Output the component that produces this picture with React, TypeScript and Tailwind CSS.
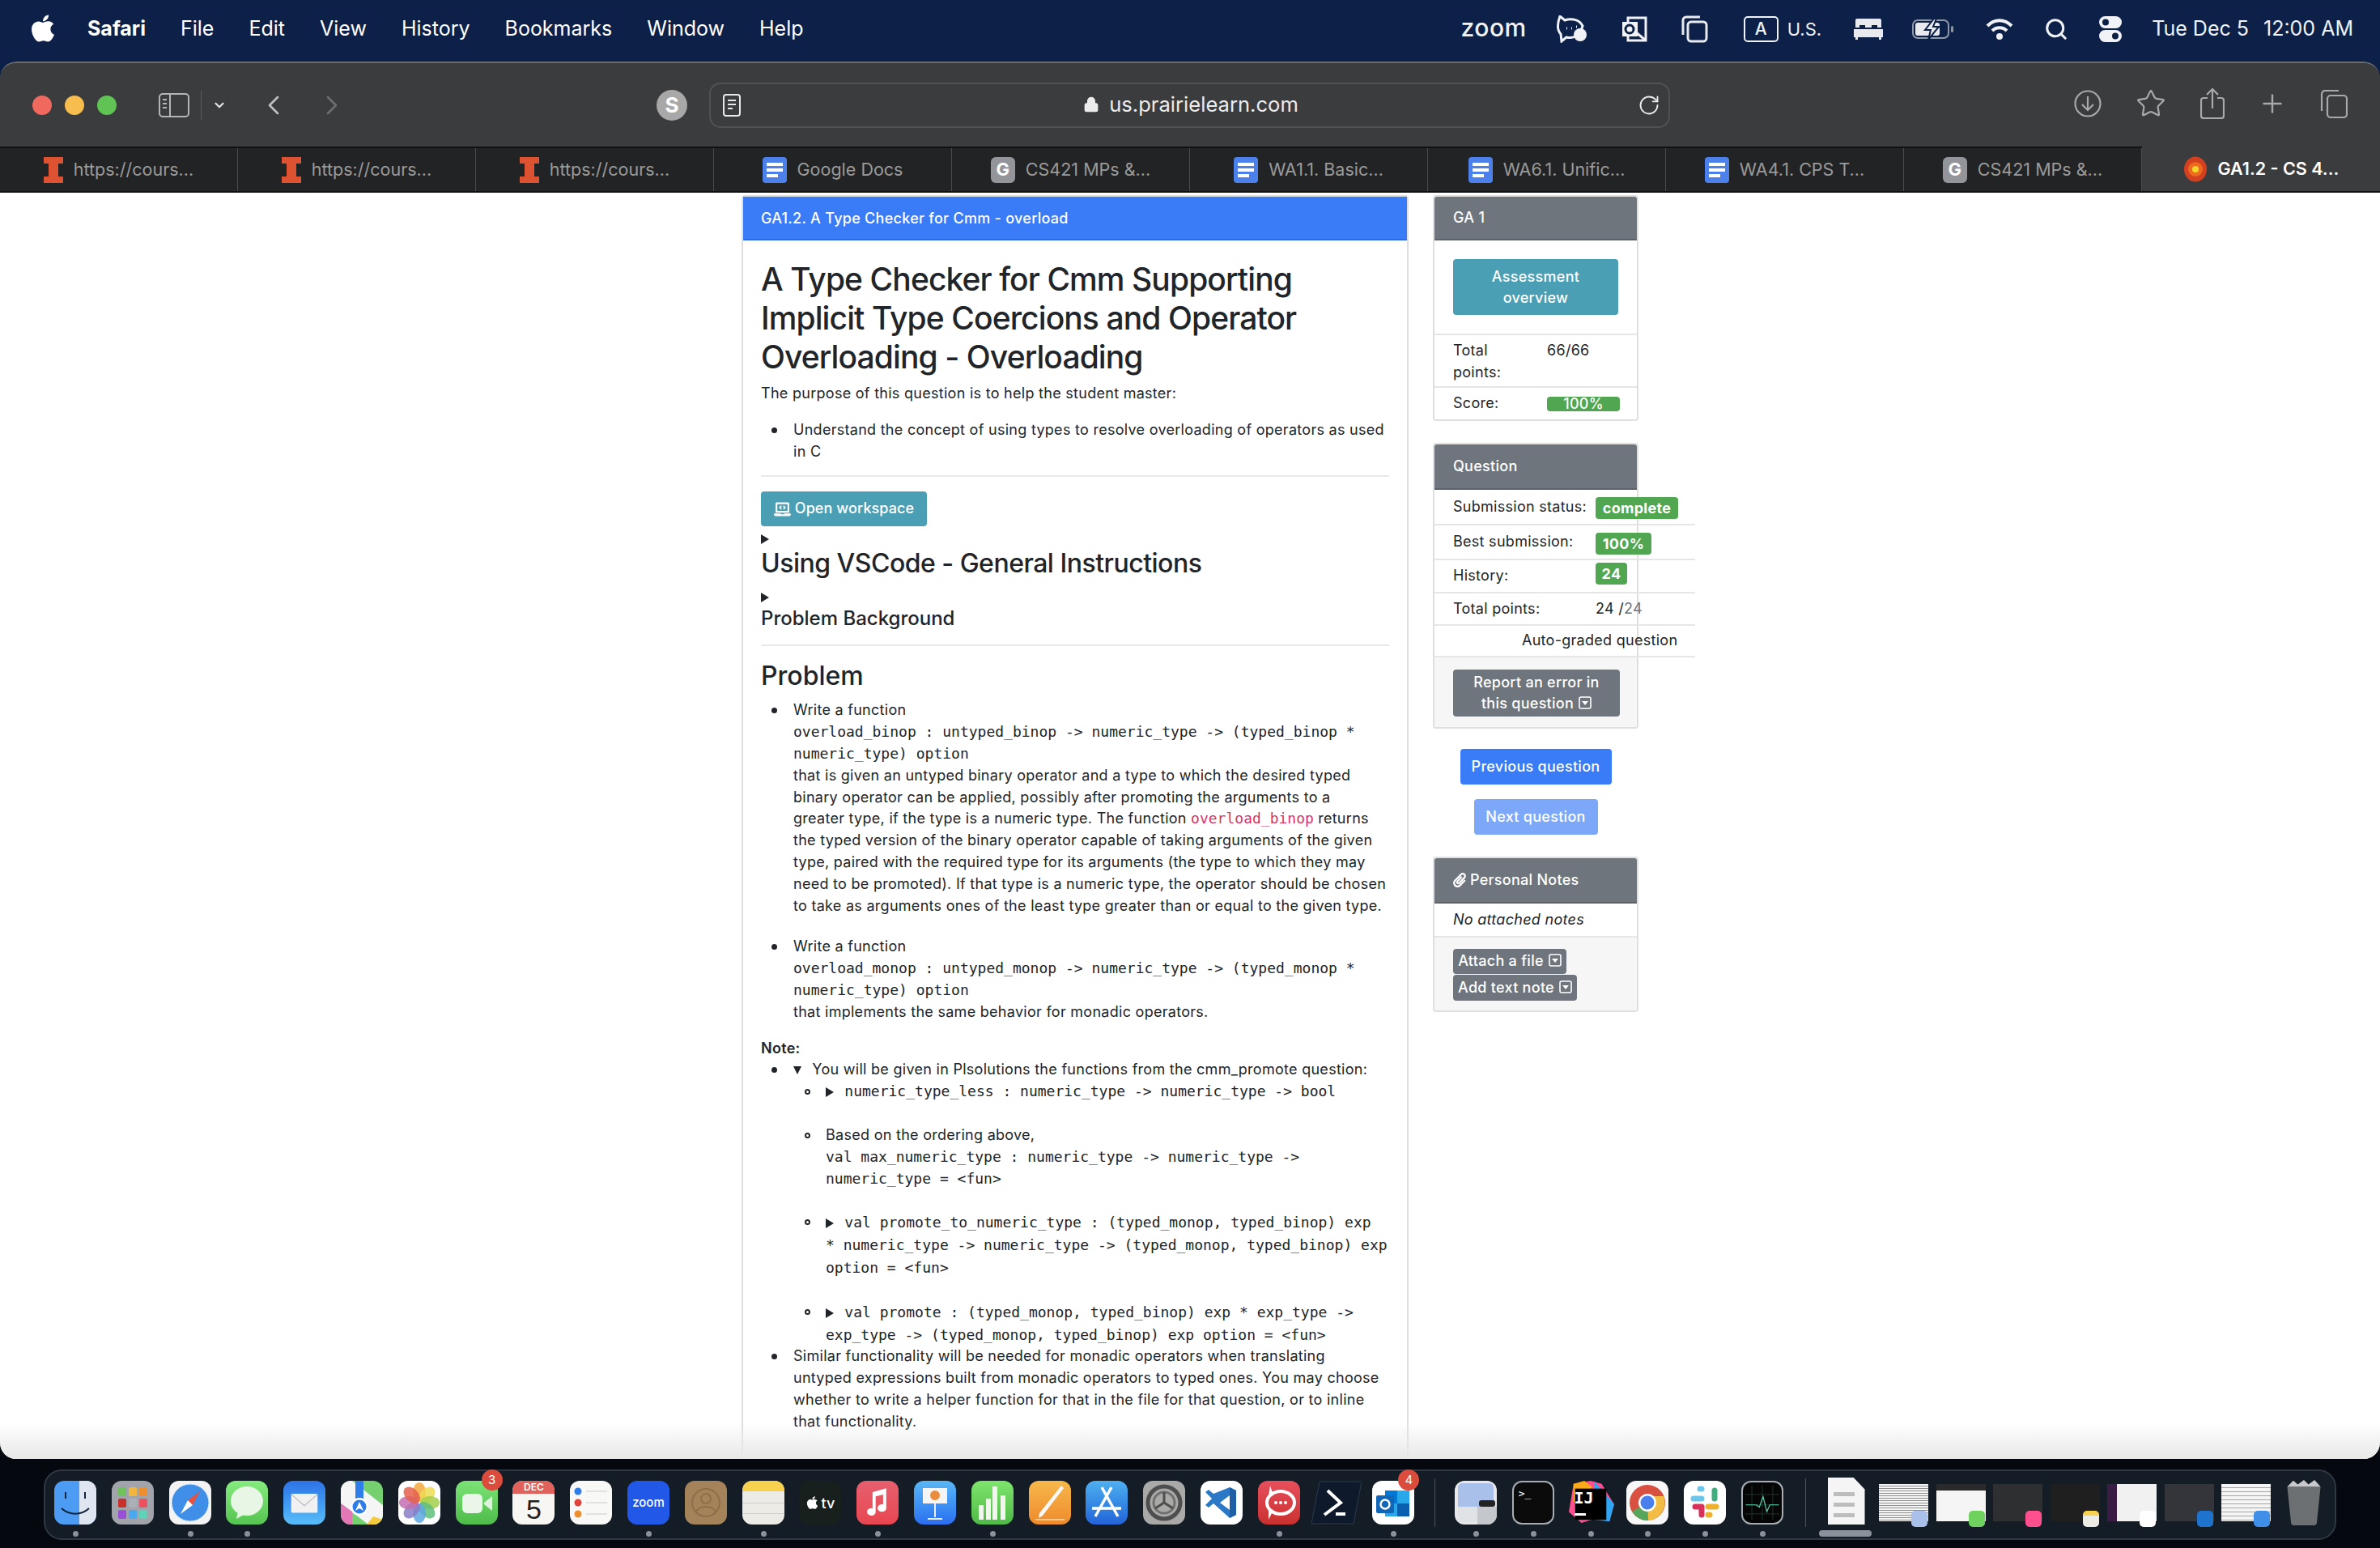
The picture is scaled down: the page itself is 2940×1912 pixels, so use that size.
import type { ReactNode } from 'react';
import { FaApple, FaLaptopCode, FaPaperclip } from 'react-icons/fa';
import { ChevronLeft, ChevronRight, ChevronDown, Plus, Search, Star, Lock, RotateCw } from 'lucide-react';

const sans = 'font-["Inter","Liberation_Sans",sans-serif]';

// safari puts its markers further from the text than chrome does
const disc = "relative before:absolute before:-left-[27px] before:top-[10px] before:w-[7px] before:h-[7px] before:rounded-full before:bg-[#212529] before:content-['']";
const circle = "relative before:absolute before:-left-[26px] before:top-[10px] before:w-[7px] before:h-[7px] before:rounded-full before:border-2 before:border-[#212529] before:content-['']";

const Tri = ({ down = false }: { down?: boolean }) => (
  <svg viewBox="0 0 10 12" className="inline-block w-[10px] h-[12px] fill-[#212529] align-[-1px]">
    {down ? <path d="M0 1h10L5 11z" /> : <path d="M0 0l10 6-10 6z" />}
  </svg>
);

const Code = ({ children }: { children: ReactNode }) => (
  <span className='font-["DejaVu_Sans_Mono",monospace] text-[18px] tracking-normal'>{children}</span>
);

const Caret = () => (
  <svg viewBox="0 0 16 16" className="inline-block w-[16px] h-[16px] ml-[6px] align-[-1px]">
    <rect x="1" y="1" width="14" height="14" rx="2" fill="none" stroke="currentColor" strokeWidth="1.6" />
    <path d="M4 6h8l-4 5z" fill="currentColor" />
  </svg>
);

const IFav = () => (
  <svg viewBox="0 0 24 32" className="w-[24px] h-[32px] fill-[#dd5331]">
    <path d="M0 0h24v8h-6v16h6v8H0v-8h6V8H0z" />
  </svg>
);
const DocFav = () => (
  <svg viewBox="0 0 30 32" className="w-[30px] h-[32px]">
    <rect width="30" height="32" rx="4" fill="#4c80ea" />
    <path d="M5 7h20v4H5zM5 14h20v4H5zM5 21h14v4H5z" fill="#fff" />
  </svg>
);
const GFav = () => (
  <div className="w-[30px] h-[32px] rounded-[6px] bg-[#94949b] text-white font-bold text-[22px] flex items-center justify-center">G</div>
);
const FlowerFav = () => (
  <svg viewBox="0 0 30 32" className="w-[30px] h-[32px]">
    <ellipse cx="15" cy="16" rx="14" ry="15.5" fill="#d2401f" />
    <circle cx="15" cy="16" r="9" fill="#ee6a1e" />
    <circle cx="15" cy="16" r="4" fill="#f1d62c" />
  </svg>
);

const tabs: { icon: ReactNode; label: string }[] = [
  { icon: <IFav />, label: 'https://cours...' },
  { icon: <IFav />, label: 'https://cours...' },
  { icon: <IFav />, label: 'https://cours...' },
  { icon: <DocFav />, label: 'Google Docs' },
  { icon: <GFav />, label: 'CS421 MPs &...' },
  { icon: <DocFav />, label: 'WA1.1. Basic...' },
  { icon: <DocFav />, label: 'WA6.1. Unific...' },
  { icon: <DocFav />, label: 'WA4.1. CPS T...' },
  { icon: <GFav />, label: 'CS421 MPs &...' },
  { icon: <FlowerFav />, label: 'GA1.2 - CS 4...' },
];

const MenuBar = () => (
  <div className="h-[76px] pl-[36px] pr-[33px] pb-[4px] flex items-center text-white text-[25px]">
    <FaApple className="w-[34px] h-[38px] mb-[3px]" />
    <span className="ml-[38px] font-bold">Safari</span>
    <span className="ml-[43px]">File</span>
    <span className="ml-[43px]">Edit</span>
    <span className="ml-[43px]">View</span>
    <span className="ml-[43px]">History</span>
    <span className="ml-[43px]">Bookmarks</span>
    <span className="ml-[43px]">Window</span>
    <span className="ml-[43px]">Help</span>
    <div className="ml-auto flex items-center text-[#f0f2f5]">
      <span className="font-medium text-[30px] tracking-[0.5px] leading-none mb-[4px]">zoom</span>
      <svg viewBox="0 0 40 34" className="w-[40px] h-[34px] ml-[35px] fill-none stroke-[#f0f2f5] stroke-[3px]">
        <path d="M6 1l6 5c8-3 18-1 22 7l-2 6c-2 6-10 10-18 8L8 32l-1-9C3 19 2 12 6 1z" />
        <circle cx="31" cy="24" r="8" fill="#f0f2f5" stroke="none" />
        <path d="M14 16h1M20 16h1M26 14h1" />
      </svg>
      <svg viewBox="0 0 32 32" className="w-[32px] h-[32px] ml-[42px] fill-none stroke-[#f0f2f5] stroke-[3px]">
        <rect x="8" y="2" width="22" height="28" />
        <rect x="1" y="7" width="19" height="18" fill="#f0f2f5" stroke="none" />
        <circle cx="10" cy="16" r="5" stroke="#0b1f45" />
        <path d="M18 20l12 10" />
      </svg>
      <svg viewBox="0 0 34 34" className="w-[34px] h-[34px] ml-[41px] fill-none stroke-[#e8eaee] stroke-[3px]">
        <rect x="9" y="8" width="23" height="24" rx="4" />
        <path d="M3 24V6a4 4 0 0 1 4-4h17" />
      </svg>
      <div className="w-[43px] h-[32px] ml-[44px] rounded-[5px] border-2 border-[#f0f2f5] flex items-center justify-center text-[21px] font-medium">A</div>
      <span className="ml-[11px] text-[22px] mr-[40px]">U.S.</span>
      <svg viewBox="0 0 36 26" className="w-[36px] h-[26px] fill-[#e8eaee]">
        <path d="M4 0h28a2 2 0 0 1 2 2v9h-5V8h-7v3h-8V8H7v3H2V2a2 2 0 0 1 2-2zM0 13h36v10h-2v3h-3v-3H5v3H2v-3H0z" />
      </svg>
      <svg viewBox="0 0 52 26" className="w-[52px] h-[26px] ml-[36px]">
        <rect x="1" y="2" width="44" height="22" rx="6" fill="none" stroke="#8e98a6" strokeWidth="2" />
        <rect x="4" y="5" width="30" height="16" rx="3" fill="#e8eaee" />
        <path d="M27 0L16 14h7l-3 12 13-16h-7l4-10z" fill="#e8eaee" stroke="#0b1f45" strokeWidth="2" />
        <rect x="48" y="9" width="3" height="8" rx="1.5" fill="#8e98a6" />
      </svg>
      <svg viewBox="0 0 34 28" className="w-[34px] h-[28px] ml-[39px] fill-none stroke-[#f0f2f5] stroke-[4px]">
        <path d="M2 10c9-9 21-9 30 0M8 16c5-5 13-5 18 0" />
        <circle cx="17" cy="23" r="4" fill="#f0f2f5" stroke="none" />
      </svg>
      <Search className="w-[30px] h-[30px] ml-[38px]" strokeWidth={2.4} />
      <svg viewBox="0 0 28 32" className="w-[28px] h-[32px] ml-[38px]">
        <rect width="28" height="15" rx="7.5" fill="#f0f2f5" />
        <rect y="17" width="28" height="15" rx="7.5" fill="#f0f2f5" />
        <circle cx="8" cy="7.5" r="4" fill="#0b1f45" />
        <circle cx="20" cy="24.5" r="4" fill="#0b1f45" />
      </svg>
      <span className="ml-[37px]">Tue Dec 5</span>
      <span className="ml-[18px]">12:00 AM</span>
    </div>
  </div>
);

const Toolbar = () => (
  <div className="h-[105px] flex items-center bg-[#3b3c3e] border-t-2 border-[#6a6b6c] rounded-t-[20px] text-[#a9a9a9]">
    <div className="w-[24px] h-[24px] ml-[40px] rounded-full bg-[#f0695e]" />
    <div className="w-[24px] h-[24px] ml-[16px] rounded-full bg-[#f7bd4f]" />
    <div className="w-[24px] h-[24px] ml-[16px] rounded-full bg-[#5fc454]" />
    <svg viewBox="0 0 38 30" className="w-[38px] h-[30px] ml-[52px] fill-none stroke-[#b5b5b5] stroke-[2px]">
      <rect x="1" y="1" width="36" height="28" rx="4" />
      <path d="M14 1v28" />
      <path d="M5 8h5M5 13h5M5 18h5" />
    </svg>
    <div className="w-px h-[36px] ml-[14px] bg-[#5b5c5e]" />
    <ChevronDown className="w-[18px] h-[18px] ml-[13px] text-[#e0e0e0]" strokeWidth={3} />
    <ChevronLeft className="w-[40px] h-[40px] ml-[38px] text-[#c0c0c0]" strokeWidth={1.6} />
    <ChevronRight className="w-[40px] h-[40px] ml-[32px] text-[#6c6d6f]" strokeWidth={1.6} />
    <div className="w-[38px] h-[38px] ml-[381px] rounded-full bg-[#a8a8a8] text-white font-bold text-[26px] flex items-center justify-center">S</div>
    <div className="w-[1187px] h-[56px] ml-[27px] rounded-[14px] border-2 border-[#505153] flex items-center pl-[15px] pr-[10px] text-[#ececec]">
      <svg viewBox="0 0 22 28" className="w-[22px] h-[28px] fill-none stroke-[#e8e8e8] stroke-[2px]">
        <rect x="1" y="1" width="20" height="26" rx="3" />
        <path d="M6 8h10M6 13h10M6 18h6" />
      </svg>
      <div className="flex-1 flex items-center justify-center pl-[4px] text-[25.6px]">
        <Lock className="w-[20px] h-[20px] mr-[12px] fill-[#ececec]" />
        <span>us.prairielearn.com</span>
      </div>
      <RotateCw className="w-[28px] h-[28px]" strokeWidth={1.6} />
    </div>
    <div className="flex items-center mb-[4px]">
      <svg viewBox="0 0 34 34" className="w-[34px] h-[34px] ml-[499px] fill-none stroke-[#a9a9a9] stroke-[2.2px]">
        <circle cx="17" cy="17" r="15.5" />
        <path d="M17 8v17M10 18l7 7 7-7" />
      </svg>
      <Star className="w-[38px] h-[38px] ml-[42px]" strokeWidth={1.4} />
      <svg viewBox="0 0 30 38" className="w-[30px] h-[38px] ml-[42px] fill-none stroke-[#a9a9a9] stroke-[2.2px]">
        <path d="M9 12H4a3 3 0 0 0-3 3v19a3 3 0 0 0 3 3h22a3 3 0 0 0 3-3V15a3 3 0 0 0-3-3h-5" />
        <path d="M15 25V2M8 8l7-7 7 7" />
      </svg>
      <Plus className="w-[36px] h-[36px] ml-[41px]" strokeWidth={1.6} />
      <svg viewBox="0 0 34 36" className="w-[34px] h-[36px] ml-[41px] fill-none stroke-[#a9a9a9] stroke-[2.2px]">
        <rect x="9" y="8" width="24" height="27" rx="4" />
        <path d="M2 27V6a4 4 0 0 1 4-4h17" />
      </svg>
    </div>
  </div>
);

const TabBar = () => (
  <div className="h-[57px] grid grid-cols-10 bg-[#222324] border-y-2 border-[#111]">
    {tabs.map((t, i) => (
      <div
        key={i}
        className={
          i === 9
            ? 'flex items-center justify-center gap-[13px] bg-[#3b3c3e] -mt-[2px] text-white font-semibold text-[21.5px]'
            : 'flex items-center justify-center gap-[13px] border-r border-[#4a4b4c] text-[#9a9a9a] text-[21.5px]'
        }
      >
        {t.icon}
        <span>{t.label}</span>
      </div>
    ))}
  </div>
);

const MainCard = () => (
  <div className="w-[824px] shrink-0 border-x-2 border-t-2 border-[#dfdfdf] rounded-t-[4px] self-stretch text-[18px] tracking-[0.28px]">
    <div className="h-[54px] px-[22px] flex items-center bg-[#3a7bf8] text-white font-medium border-b-2 border-[#2e6bdf]">
      GA1.2. A Type Checker for Cmm - overload
    </div>
    <div className="px-[22px] leading-[26.8px]">
      <h1 className="mt-[24px] text-[39px] leading-[48px] font-medium tracking-[-0.9px]">
        A Type Checker for Cmm Supporting
        <br />
        Implicit Type Coercions and Operator
        <br />
        Overloading - Overloading
      </h1>
      <p className="mt-[8px]">The purpose of this question is to help the student master:</p>
      <ul className="mt-[18px] pl-[40px]">
        <li className={disc}>
          Understand the concept of using types to resolve overloading of operators as used
          <br />
          in C
        </li>
      </ul>
      <hr className="mt-[16px] border-t-2 border-[#e9e9e9]" />
      <button className="mt-[18px] h-[43px] w-[205px] bg-[#4b9fb5] rounded-[4px] text-white font-medium tracking-[0.1px] flex items-center justify-center gap-[5px]">
        <FaLaptopCode className="w-[21px] h-[18px]" />
        Open workspace
      </button>
      <div className="mt-[5px] h-[20px] leading-[20px]">
        <Tri />
      </div>
      <h2 className="mt-[2px] text-[32px] leading-[38px] font-medium tracking-[-0.5px]">Using VSCode - General Instructions</h2>
      <div className="mt-[12px] h-[20px] leading-[20px]">
        <Tri />
      </div>
      <h3 className="mt-[2px] text-[24px] leading-[29px] font-medium tracking-normal">Problem Background</h3>
      <hr className="mt-[18px] border-t-2 border-[#e9e9e9]" />
      <h2 className="mt-[18px] text-[32px] leading-[38px] font-medium tracking-normal">Problem</h2>
      <ul className="mt-[10px] pl-[40px]">
        <li className={disc}>
          Write a function
          <br />
          <Code>overload_binop : untyped_binop -&gt; numeric_type -&gt; (typed_binop *</Code>
          <br />
          <Code>numeric_type) option</Code>
          <br />
          that is given an untyped binary operator and a type to which the desired typed
          <br />
          binary operator can be applied, possibly after promoting the arguments to a
          <br />
          greater type, if the type is a numeric type. The function{' '}
          <span className='font-["DejaVu_Sans_Mono",monospace] text-[18px] tracking-normal text-[#d6336c]'>overload_binop</span> returns
          <br />
          the typed version of the binary operator capable of taking arguments of the given
          <br />
          type, paired with the required type for its arguments (the type to which they may
          <br />
          need to be promoted). If that type is a numeric type, the operator should be chosen
          <br />
          to take as arguments ones of the least type greater than or equal to the given type.
        </li>
        <li className={`mt-[24px] ${disc}`}>
          Write a function
          <br />
          <Code>overload_monop : untyped_monop -&gt; numeric_type -&gt; (typed_monop *</Code>
          <br />
          <Code>numeric_type) option</Code>
          <br />
          that implements the same behavior for monadic operators.
        </li>
      </ul>
      <p className="mt-[18px] font-semibold">Note:</p>
      <ul className="pl-[40px]">
        <li className={disc}>
          <Tri down /> <span className="ml-[8px]">You will be given in Plsolutions the functions from the cmm_promote question:</span>
          <ul className="pl-[40px]">
            <li className={circle}>
              <Tri /> <span className="ml-[8px]"><Code>numeric_type_less : numeric_type -&gt; numeric_type -&gt; bool</Code></span>
            </li>
            <li className={`mt-[27px] ${circle}`}>
              Based on the ordering above,
              <br />
              <Code>val max_numeric_type : numeric_type -&gt; numeric_type -&gt;</Code>
              <br />
              <Code>numeric_type = &lt;fun&gt;</Code>
            </li>
            <li className={`mt-[27px] leading-[28px] ${circle}`}>
              <Tri /> <span className="ml-[8px]"><Code>val promote_to_numeric_type : (typed_monop, typed_binop) exp</Code></span>
              <br />
              <Code>* numeric_type -&gt; numeric_type -&gt; (typed_monop, typed_binop) exp</Code>
              <br />
              <Code>option = &lt;fun&gt;</Code>
            </li>
            <li className={`mt-[27px] leading-[28px] ${circle}`}>
              <Tri /> <span className="ml-[8px]"><Code>val promote : (typed_monop, typed_binop) exp * exp_type -&gt;</Code></span>
              <br />
              <Code>exp_type -&gt; (typed_monop, typed_binop) exp option = &lt;fun&gt;</Code>
            </li>
          </ul>
        </li>
        <li className={`-mt-[1px] ${disc}`}>
          Similar functionality will be needed for monadic operators when translating
          <br />
          untyped expressions built from monadic operators to typed ones. You may choose
          <br />
          whether to write a helper function for that in the file for that question, or to inline
          <br />
          that functionality.
        </li>
      </ul>
    </div>
  </div>
);

const SideHeader = ({ tall = false, children }: { tall?: boolean; children: ReactNode }) => (
  <div className={`${tall ? 'h-[56px]' : 'h-[54px]'} px-[23px] flex items-center bg-[#6f757d] text-white font-medium border-b-2 border-[#5d6268] rounded-t-[3px]`}>
    {children}
  </div>
);

const Badge = ({ children, className }: { children: ReactNode; className: string }) => (
  <span className={`h-[27px] rounded-[4px] bg-[#50a651] text-white font-bold leading-[27px] text-center ${className}`}>
    {children}
  </span>
);

const SideColumn = () => (
  <div className="w-[254px] shrink-0 text-[18px] tracking-[0.28px] leading-[26.8px] text-[#212529]">
    <div className="border-2 border-[#dfdfdf] rounded-[4px]">
      <SideHeader>GA 1</SideHeader>
      <div className="h-[117px] px-[23px] flex items-center border-b-2 border-[#e6e6e6]">
        <button className="w-[206px] h-[69px] bg-[#4b9fb5] rounded-[4px] text-white font-medium leading-[26px]">
          Assessment
          <br />
          overview
        </button>
      </div>
      <div className="h-[65px] pl-[23px] flex pt-[6px] border-b-2 border-[#e6e6e6]">
        <span className="w-[116px]">
          Total
          <br />
          points:
        </span>
        <span>66/66</span>
      </div>
      <div className="h-[39px] pl-[23px] flex items-center">
        <span className="w-[116px]">Score:</span>
        <span className="w-[90px] h-[18px] rounded-[4px] bg-[#50a651] text-white font-medium text-center leading-[18px]">100%</span>
      </div>
    </div>

    <div className="mt-[27px] border-2 border-[#dfdfdf] rounded-[4px]">
      <SideHeader tall>Question</SideHeader>
      <div className="w-[322px]">
        <div className="h-[44px] pl-[23px] flex items-center border-b-2 border-[#e6e6e6]">
          <span className="w-[176px]">Submission status:</span>
          <Badge className="w-[102px] mt-[3px]">complete</Badge>
        </div>
        <div className="h-[43px] pl-[23px] flex items-center border-b-2 border-[#e6e6e6]">
          <span className="w-[176px]">Best submission:</span>
          <Badge className="w-[69px] mt-[3px]">100%</Badge>
        </div>
        <div className="h-[41px] pl-[23px] flex items-center border-b-2 border-[#e6e6e6]">
          <span className="w-[176px]">History:</span>
          <Badge className="w-[39px] -mt-[6px]">24</Badge>
        </div>
        <div className="h-[40px] pl-[23px] flex items-center border-b-2 border-[#e6e6e6]">
          <span className="w-[176px]">Total points:</span>
          <span>
            24 /<span className="text-[#6c757d]">24</span>
          </span>
        </div>
        <div className="h-[39px] pl-[108px] flex items-center border-b-2 border-[#e6e6e6]">Auto-graded question</div>
      </div>
      <div className="h-[86px] px-[23px] pt-[15px] bg-[#f6f6f6]">
        <button className="w-[206px] h-[58px] bg-[#6f757d] rounded-[4px] text-white font-medium leading-[26px]">
          Report an error in
          <br />
          this question
          <Caret />
        </button>
      </div>
    </div>

    <div className="mt-[25px] flex flex-col items-center gap-[18px]">
      <button className="w-[187px] h-[44px] bg-[#3a7bf8] rounded-[4px] text-white font-medium">Previous question</button>
      <button className="w-[153px] h-[44px] bg-[#7da8f9] rounded-[4px] text-white font-medium">Next question</button>
    </div>

    <div className="mt-[27px] border-2 border-[#dfdfdf] rounded-[4px]">
      <SideHeader tall>
        <FaPaperclip className="w-[16px] h-[18px] mr-[5px]" />
        Personal Notes
      </SideHeader>
      <div className="h-[42px] px-[23px] flex items-center italic border-b-2 border-[#e6e6e6]">No attached notes</div>
      <div className="h-[90px] px-[23px] pt-[14px] bg-[#f6f6f6] flex flex-col items-start gap-px">
        <button className="h-[31px] w-[140px] bg-[#6f757d] rounded-[4px] text-white font-medium whitespace-nowrap">
          Attach a file
          <Caret />
        </button>
        <button className="h-[32px] w-[153px] bg-[#6f757d] rounded-[4px] text-white font-medium whitespace-nowrap">
          Add text note
          <Caret />
        </button>
      </div>
    </div>
  </div>
);

const Tile = ({ className, children }: { className: string; children?: ReactNode }) => (
  <div className={`relative w-[52px] h-[54px] rounded-[12px] overflow-hidden flex items-center justify-center ${className}`}>{children}</div>
);

const Notify = ({ n }: { n: number }) => (
  <div className="absolute -top-[14px] -right-[6px] w-[26px] h-[26px] rounded-full bg-[#dc4c3d] text-white text-[15px] flex items-center justify-center">{n}</div>
);

const dockApps: { el: ReactNode; dot?: boolean }[] = [
  {
    dot: true,
    el: (
      <Tile className="bg-[#4c9cf3]">
        <div className="absolute right-0 top-0 bottom-0 w-[40%] bg-[#dfe6ef]" />
        <svg viewBox="0 0 52 54" className="absolute inset-0 fill-none stroke-[#10233f] stroke-[2px]">
          <path d="M14 14v8M38 14v8M9 34c10 9 24 9 34 0" />
        </svg>
      </Tile>
    ),
  },
  {
    el: (
      <Tile className="bg-[#a1a4aa] grid grid-cols-3 gap-[3px] p-[8px]">
        {['#6fc35a', '#f2b73c', '#ee8e2d', '#c9302a', '#aab0b5', '#ec5160', '#9a4fd8', '#4aa8f2', '#5fd3b7'].map((c) => (
          <div key={c} className="h-[11px] rounded-[2px]" style={{ background: c }} />
        ))}
      </Tile>
    ),
  },
  {
    dot: true,
    el: (
      <Tile className="bg-[#f3f3f3]">
        <svg viewBox="0 0 52 54" className="w-[52px] h-[54px]">
          <circle cx="26" cy="27" r="23" fill="#3f8fe8" stroke="#d8e8f8" strokeWidth="1" />
          <path d="M38 13L23 24l6 6z" fill="#e8503f" />
          <path d="M14 41l15-11-6-6z" fill="#fff" />
        </svg>
      </Tile>
    ),
  },
  {
    dot: true,
    el: (
      <Tile className="bg-gradient-to-b from-[#85ec7d] to-[#55c451]">
        <svg viewBox="0 0 52 54" className="w-[52px] h-[54px]">
          <ellipse cx="26" cy="25" rx="20" ry="18" fill="#e8f6e6" />
          <path d="M15 38l-2 9 9-5z" fill="#e8f6e6" />
        </svg>
      </Tile>
    ),
  },
  {
    el: (
      <Tile className="bg-gradient-to-b from-[#2e72e6] to-[#58bdf8]">
        <svg viewBox="0 0 52 54" className="w-[40px] h-[40px]">
          <rect x="4" y="12" width="44" height="32" rx="2" fill="#f1f1f1" />
          <path d="M4 13l22 19 22-19" fill="none" stroke="#b8b8b8" strokeWidth="1.5" />
        </svg>
      </Tile>
    ),
  },
  {
    el: (
      <Tile className="bg-[#75d06f]">
        <svg viewBox="0 0 52 54" className="w-[52px] h-[54px]">
          <path d="M0 0h14L52 30v24H34L0 28z" fill="#f5f5f5" />
          <path d="M18 0h10v30H18z" fill="#2f7de8" />
          <path d="M0 28l14 10v16H0z" fill="#e278b5" />
          <path d="M32 54l8-10 12 4v6z" fill="#f4c93c" />
          <circle cx="23" cy="32" r="11" fill="#fff" />
          <circle cx="23" cy="32" r="8.5" fill="#2f7de8" />
          <path d="M23 26l5 11-5-3-5 3z" fill="#fff" />
        </svg>
      </Tile>
    ),
  },
  {
    el: (
      <Tile className="bg-white">
        <svg viewBox="0 0 52 54" className="w-[52px] h-[54px]">
          {['#f2a93b', '#eddb52', '#a5cf4b', '#5fbf7b', '#5da7e0', '#8a7cc8', '#c46eb0', '#e5604c'].map((c, i) => (
            <ellipse key={c} cx="26" cy="14" rx="8" ry="12" fill={c} opacity="0.85" transform={`rotate(${i * 45} 26 27)`} />
          ))}
        </svg>
      </Tile>
    ),
  },
  {
    el: (
      <div className="relative">
        <Tile className="bg-gradient-to-b from-[#7ce476] to-[#4dbb4a]">
          <svg viewBox="0 0 52 54" className="w-[52px] h-[54px]">
            <rect x="8" y="16" width="25" height="24" rx="6" fill="#eaf7e8" />
            <path d="M35 27l10-8v18l-10-8z" fill="#dff2dd" />
          </svg>
        </Tile>
        <Notify n={3} />
      </div>
    ),
  },
  {
    el: (
      <Tile className="bg-[#f7f6f3] flex-col justify-start">
        <div className="w-full h-[16px] bg-[#e0625a] text-white text-[12px] font-semibold text-center leading-[16px]">DEC</div>
        <div className='text-[34px] leading-[38px] text-[#222] font-["Liberation_Sans",sans-serif]'>5</div>
      </Tile>
    ),
  },
  {
    el: (
      <Tile className="bg-[#f8f8f6]">
        <svg viewBox="0 0 52 54" className="w-[52px] h-[54px]">
          <circle cx="10" cy="13" r="4.5" fill="#2f7de8" />
          <circle cx="10" cy="27" r="4.5" fill="#e0443c" />
          <circle cx="10" cy="41" r="4.5" fill="#ee8e2d" />
          <path d="M20 13h26M20 27h26M20 41h26" stroke="#c9c9c9" strokeWidth="1.2" />
        </svg>
      </Tile>
    ),
  },
  {
    dot: true,
    el: <Tile className="bg-[#2158e8] text-white text-[15px] font-medium">zoom</Tile>,
  },
  {
    el: (
      <Tile className="bg-[#a4825a]">
        <svg viewBox="0 0 52 54" className="w-[52px] h-[54px] fill-none stroke-[#8e6f4a] stroke-[2px]">
          <circle cx="26" cy="27" r="17" />
          <circle cx="26" cy="22" r="6" />
          <path d="M14 38c4-8 20-8 24 0" />
        </svg>
      </Tile>
    ),
  },
  {
    dot: true,
    el: (
      <Tile className="bg-[#ecebe6] justify-start">
        <div className="absolute top-0 w-full h-[13px] bg-[#f8d24e]" />
        <div className="absolute top-[27px] w-full h-px bg-[#cfcfc9]" />
        <div className="absolute top-[40px] w-full h-px bg-[#cfcfc9]" />
      </Tile>
    ),
  },
  {
    el: (
      <Tile className="bg-[#17201c] text-white gap-[2px] text-[18px] font-medium">
        <FaApple className="w-[17px] h-[18px]" />
        tv
      </Tile>
    ),
  },
  {
    dot: true,
    el: (
      <Tile className="bg-gradient-to-b from-[#e75f6e] to-[#e84651]">
        <svg viewBox="0 0 52 54" className="w-[40px] h-[44px] fill-white">
          <path d="M18 10l22-6v31a7 6 0 1 1-5-5V14l-12 3v24a7 6 0 1 1-5-5z" />
        </svg>
      </Tile>
    ),
  },
  {
    el: (
      <Tile className="bg-gradient-to-b from-[#5ab7f5] to-[#2c6ef0]">
        <svg viewBox="0 0 52 54" className="w-[52px] h-[54px]">
          <rect x="11" y="9" width="30" height="19" fill="#f5f5f5" />
          <circle cx="26" cy="18" r="6" fill="#e98d3c" />
          <path d="M25 28h2v17h-2zM17 46h18v2H17z" fill="#f0f0f0" />
        </svg>
      </Tile>
    ),
  },
  {
    dot: true,
    el: (
      <Tile className="bg-gradient-to-b from-[#7ee56c] to-[#4fb947]">
        <svg viewBox="0 0 52 54" className="w-[52px] h-[54px] fill-[#f2f7ee]">
          <rect x="9" y="30" width="6" height="18" />
          <rect x="18" y="22" width="6" height="26" />
          <rect x="26" y="7" width="6" height="41" />
          <rect x="36" y="18" width="6" height="30" />
        </svg>
      </Tile>
    ),
  },
  {
    el: (
      <Tile className="bg-gradient-to-b from-[#f7b84a] to-[#ee8a2c]">
        <svg viewBox="0 0 52 54" className="w-[52px] h-[54px]">
          <path d="M40 6l3 3-26 34-5 3 1-6z" fill="#f7f7f7" />
          <path d="M8 48h36" stroke="#f7d9a8" strokeWidth="1.5" />
        </svg>
      </Tile>
    ),
  },
  {
    el: (
      <Tile className="bg-gradient-to-b from-[#4fb0f0] to-[#2463d8]">
        <svg viewBox="0 0 52 54" className="w-[52px] h-[54px] fill-none stroke-white stroke-[3.5px]">
          <path d="M32 8L12 44M20 8l20 36M8 34h36" />
        </svg>
      </Tile>
    ),
  },
  {
    el: (
      <Tile className="bg-[#a9aaa8]">
        <svg viewBox="0 0 52 54" className="w-[52px] h-[54px] fill-none">
          <circle cx="26" cy="27" r="20" stroke="#4e4e4e" strokeWidth="5" />
          <circle cx="26" cy="27" r="13" stroke="#707070" strokeWidth="3" />
          <path d="M26 27V14M26 27l-11 7M26 27l11 7" stroke="#4e4e4e" strokeWidth="3" />
        </svg>
      </Tile>
    ),
  },
  {
    el: (
      <Tile className="bg-white">
        <svg viewBox="0 0 52 54" className="w-[52px] h-[54px]">
          <path d="M36 8l8 4v30l-8 4-20-18-6 5-4-3 8-8-8-8 4-3 6 5z" fill="#2b78c6" />
          <path d="M36 8v38l8-4V12z" fill="#1f5fa6" />
          <path d="M36 18L24 27l12 9z" fill="#fff" />
        </svg>
      </Tile>
    ),
  },
  {
    dot: true,
    el: (
      <Tile className="bg-gradient-to-b from-[#e84f5c] to-[#c9302f]">
        <svg viewBox="0 0 52 54" className="w-[52px] h-[54px]">
          <ellipse cx="28" cy="27" rx="17" ry="14" fill="none" stroke="#fff" strokeWidth="4" />
          <path d="M15 6l4 12-6 2zM13 48l6-12-6-2z" fill="#fff" />
          <circle cx="22" cy="27" r="2" fill="#fff" />
          <circle cx="28" cy="27" r="2" fill="#fff" />
          <circle cx="34" cy="27" r="2" fill="#fff" />
        </svg>
      </Tile>
    ),
  },
  {
    el: (
      <svg viewBox="0 0 62 54" className="w-[62px] h-[54px] -ml-[5px]">
        <path d="M10 1h52l-10 52H0z" fill="#0e1a2c" stroke="#2c3a4e" />
        <path d="M20 12l16 15-20 15" fill="none" stroke="#fff" strokeWidth="4" />
        <path d="M30 41h12" stroke="#fff" strokeWidth="4" />
      </svg>
    ),
  },
  {
    dot: true,
    el: (
      <div className="relative">
        <Tile className="bg-white">
          <svg viewBox="0 0 52 54" className="w-[52px] h-[54px]">
            <rect x="16" y="12" width="30" height="32" fill="#28a8ea" />
            <rect x="16" y="12" width="15" height="16" fill="#0078d4" />
            <rect x="31" y="28" width="15" height="16" fill="#0a5fb0" />
            <rect x="5" y="18" width="22" height="22" rx="2" fill="#1166b8" />
            <circle cx="16" cy="29" r="5.5" fill="none" stroke="#fff" strokeWidth="2.5" />
          </svg>
        </Tile>
        <Notify n={4} />
      </div>
    ),
  },
];

const dockRight: { el: ReactNode; dot?: boolean }[] = [
  {
    dot: true,
    el: (
      <Tile className="bg-[#e8e8ea]">
        <svg viewBox="0 0 52 54" className="w-[52px] h-[54px]">
          <rect x="4" y="3" width="44" height="48" rx="5" fill="#a9c0ea" />
          <rect x="4" y="32" width="44" height="19" fill="#dfe3e6" />
          <rect x="30" y="24" width="20" height="8" rx="3" fill="#222" />
          <path d="M28 32h24v22H28z" fill="#c4c8cc" />
        </svg>
      </Tile>
    ),
  },
  {
    dot: true,
    el: (
      <Tile className="bg-[#0b0b0b] border-2 border-[#a8adb3] text-white justify-start items-start">
        <span className='ml-[6px] mt-[4px] text-[13px] font-["DejaVu_Sans_Mono",monospace]'>&gt;_</span>
      </Tile>
    ),
  },
  {
    dot: true,
    el: (
      <div className="relative w-[52px] h-[54px]">
        <svg viewBox="0 0 60 56" className="absolute -left-[4px] top-0 w-[60px] h-[54px]">
          <path d="M2 40L8 4l22-4 14 4 16 26-6 22-16-4-20 6z" fill="#ff4f8f" />
          <path d="M34 0l26 30-6 22-18-2z" fill="#2ea6f5" />
          <path d="M8 4l14-4 10 8-24 20z" fill="#fba918" />
          <rect x="10" y="10" width="40" height="40" fill="#000" />
        </svg>
        <span className='absolute left-[6px] top-[11px] text-white font-bold text-[20px] font-["DejaVu_Sans_Mono",monospace] leading-none'>IJ</span>
        <div className="absolute left-[6px] top-[40px] w-[14px] h-[3px] bg-white" />
      </div>
    ),
  },
  {
    dot: true,
    el: (
      <Tile className="bg-[#f7f7f7]">
        <svg viewBox="0 0 52 54" className="w-[52px] h-[54px]">
          <circle cx="26" cy="27" r="22" fill="#d85140" />
          <path d="M26 27L7 38a22 22 0 0 0 20 11z" fill="#58a55c" />
          <path d="M26 27l1 22a22 22 0 0 0 19-30H26z" fill="#f2bd42" />
          <circle cx="26" cy="27" r="11" fill="#fff" />
          <circle cx="26" cy="27" r="8.5" fill="#4a80ee" />
        </svg>
      </Tile>
    ),
  },
  {
    dot: true,
    el: (
      <Tile className="bg-white">
        <svg viewBox="0 0 52 54" className="w-[52px] h-[54px]" strokeLinecap="round">
          <path d="M12 22h10M20 10h2" stroke="#6cc5ea" strokeWidth="7" />
          <path d="M38 12v10" stroke="#3fae7e" strokeWidth="7" />
          <path d="M30 32h10" stroke="#ecb22e" strokeWidth="7" />
          <path d="M14 32h8M22 32v10" stroke="#d8315b" strokeWidth="7" />
          <path d="M30 42h2" stroke="#ecb22e" strokeWidth="7" />
        </svg>
      </Tile>
    ),
  },
  {
    dot: true,
    el: (
      <Tile className="bg-[#050505] border-2 border-[#a8adb3]">
        <svg viewBox="0 0 52 54" className="w-[48px] h-[50px] fill-none">
          <path d="M12 4v46M26 4v46M40 4v46M3 16h46M3 30h46M3 42h46" stroke="#1f3a2e" />
          <path d="M4 30h14l4 3 5-14 5 20 4-9h12" stroke="#5fd0b0" strokeWidth="1.3" />
        </svg>
      </Tile>
    ),
  },
];

const Thumb = ({ className, children }: { className: string; children?: ReactNode }) => (
  <div className="relative w-[61px] h-[54px]">
    <div className={`absolute inset-x-0 top-[4px] h-[46px] ${className}`} />
    {children}
  </div>
);

const MiniIcon = ({ className }: { className: string }) => (
  <div className={`absolute top-[37px] left-[40px] w-[20px] h-[20px] rounded-[5px] ${className}`} />
);

const Dot = () => <div className="absolute -bottom-[15px] left-1/2 -ml-[3px] w-[7px] h-[7px] rounded-full bg-[#8b919a]" />;

const DockItem = ({ el, dot }: { el: ReactNode; dot?: boolean }) => (
  <div className="relative w-[52px] h-[54px] shrink-0">
    {el}
    {dot && <Dot />}
  </div>
);

const Dock = () => (
  <div className="mt-[13px] mx-[54px] h-[87px] rounded-[22px] bg-[#141c26] border-2 border-[#2f3742] pl-[11px] pt-[12px] flex gap-[18.8px]">
    {dockApps.map((a, i) => (
      <DockItem key={i} {...a} />
    ))}
    <div className="w-px h-[60px] bg-[#4b525c] -mt-[3px] mx-[5.5px]" />
    {dockRight.map((a, i) => (
      <DockItem key={i} {...a} />
    ))}
    <div className="w-px h-[60px] bg-[#4b525c] -mt-[3px] mx-[8px]" />
    <div className="relative w-[46px] h-[58px] -mt-[4px] shrink-0">
      <div className="absolute inset-0 bg-[#f5f5f5] [clip-path:polygon(0_0,70%_0,100%_25%,100%_100%,0_100%)]" />
      <div className="absolute left-[7px] top-[18px] w-[26px] h-[5px] bg-[#bdbdbd] shadow-[0_13px_0_#bdbdbd,0_26px_0_#bdbdbd]" />
      <div className="absolute -bottom-[15px] -left-[11px] w-[65px] h-[8px] rounded-[4px] bg-[#8b919a]" />
    </div>
    <div className="flex -ml-[1px] gap-[9.5px]">
      <Thumb className="bg-[#f1f1f1] bg-[repeating-linear-gradient(180deg,#f5f5f5_0,#f5f5f5_2px,#8f8f8f_2px,#8f8f8f_3px)]">
        <MiniIcon className="bg-[#a9c0ea]" />
      </Thumb>
      <Thumb className="bg-[#f5f5f5] border-t-[8px] border-[#2a2a2a]">
        <MiniIcon className="bg-[#6fd25f]" />
      </Thumb>
      <Thumb className="bg-[#2d2f31]">
        <MiniIcon className="bg-[#ff4f8f]" />
      </Thumb>
      <Thumb className="bg-[#1f1f1f]">
        <MiniIcon className="bg-[#ecebe6] border-t-[6px] border-[#f8d24e]" />
      </Thumb>
      <Thumb className="bg-[#f1f1f1] border-l-[12px] border-[#3b1c44]">
        <MiniIcon className="bg-white" />
      </Thumb>
      <Thumb className="bg-[#33353a]">
        <MiniIcon className="bg-[#1e74cc]" />
      </Thumb>
      <Thumb className="bg-[#f5f5f5] bg-[repeating-linear-gradient(180deg,#f5f5f5_0,#f5f5f5_4px,#a5a5a5_4px,#a5a5a5_5px)]">
        <MiniIcon className="bg-[#3f8fe8]" />
      </Thumb>
    </div>
    <svg viewBox="0 0 48 62" className="w-[48px] h-[58px] -mt-[2px] -ml-[2px] shrink-0">
      <path d="M2 10h44l-5 48a4 4 0 0 1-4 3H11a4 4 0 0 1-4-3z" fill="#6d7073" />
      <path d="M2 10l8-8 6 5 8-6 6 6 8-6 8 9z" fill="#c9c9cb" />
    </svg>
  </div>
);

export default function App() {
  return (
    <div className={`w-[2940px] h-[1912px] overflow-hidden flex flex-col bg-[linear-gradient(180deg,#0d2148_0,#0d2148_200px,#05090f_1800px)] ${sans}`}>
      <MenuBar />
      <div className="h-[1726px] flex flex-col rounded-[20px] overflow-hidden">
        <Toolbar />
        <TabBar />
        <main className="relative flex-1 min-h-0 overflow-hidden bg-white pt-[3px] flex justify-center items-start gap-[30px] text-[#212529]">
          <MainCard />
          <SideColumn />
          <div className="absolute inset-x-0 bottom-0 h-[45px] bg-gradient-to-b from-[#e8e8e8]/0 to-[#e8e8e8] pointer-events-none" />
        </main>
      </div>
      <Dock />
    </div>
  );
}
